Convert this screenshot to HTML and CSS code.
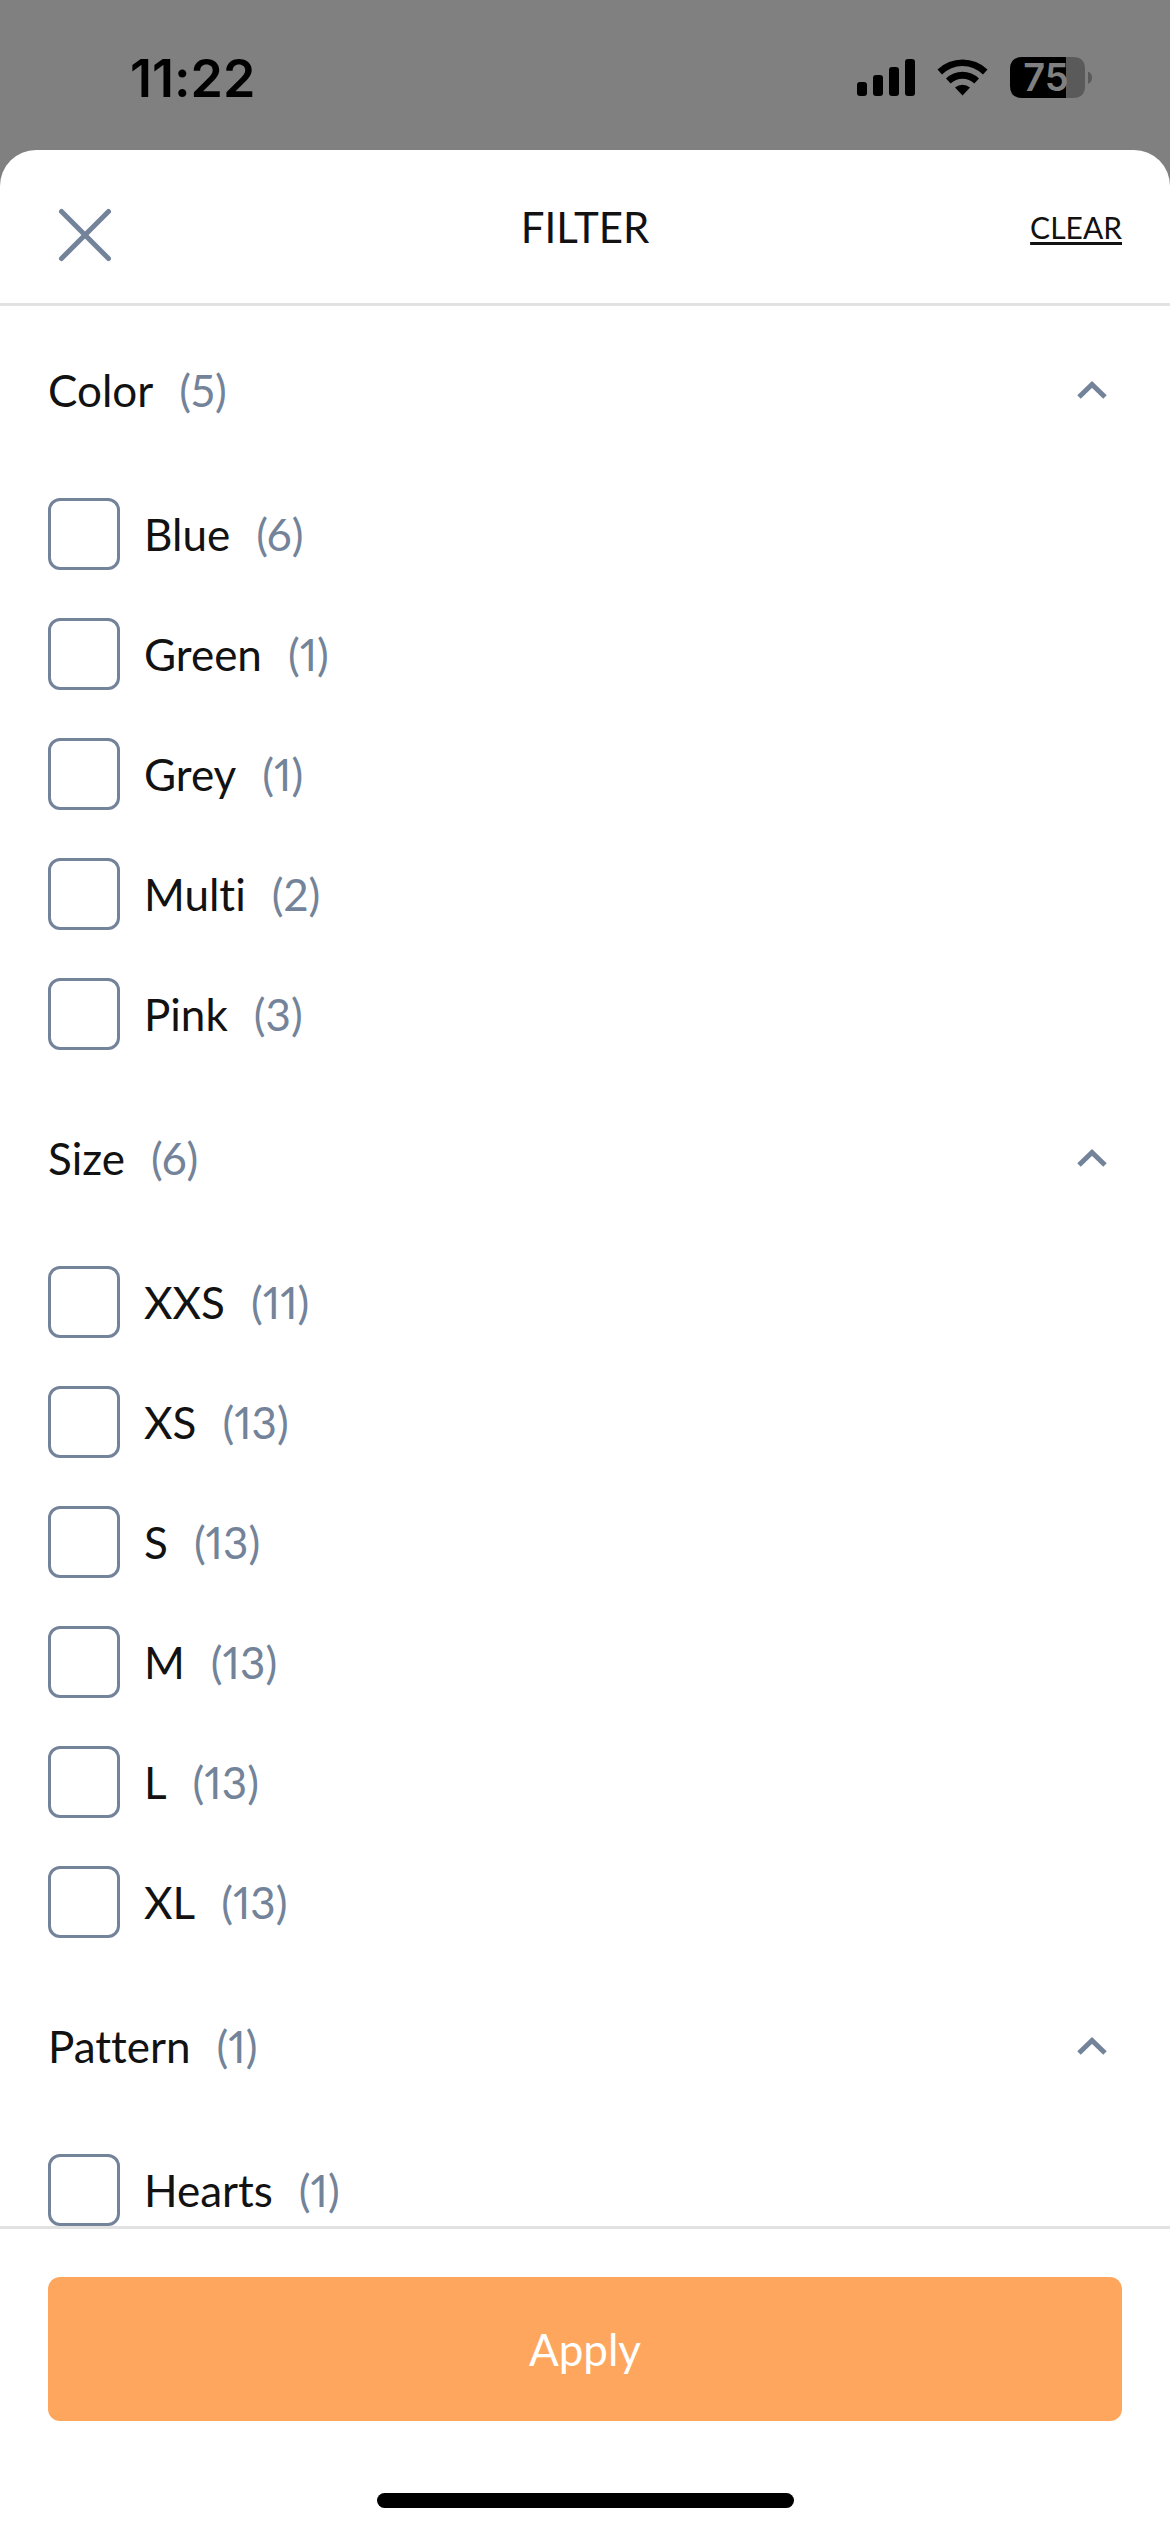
FILE: index.html
```
<!DOCTYPE html>
<html lang="en">
<head>
    <meta charset="UTF-8">
    <meta name="viewport" content="width=device-width, initial-scale=1.0">
    <title>Filter</title>
    <link rel="stylesheet" href="styles.css">
</head>
<body>
    <div class="status-bar">
        <span class="time">11:22</span>
        <div class="status-icons">
            <svg width="58" height="42" viewBox="0 0 58 42">
                <rect x="0" y="25" width="10" height="14" rx="3"/>
                <rect x="16" y="18" width="10" height="21" rx="3"/>
                <rect x="32" y="10" width="10" height="29" rx="3"/>
                <rect x="48" y="2" width="10" height="37" rx="3"/>
            </svg>
            <svg width="51" height="42" viewBox="0 0 51 42">
                <path d="M0.5 12.5A36 36 0 0 1 50.5 12.5L46 17.5A29 29 0 0 0 5 17.5Z"/>
                <path d="M9 21.5A23.500 23.500 0 0 1 42 21.500L37.300 26.500A17 17 0 0 0 13.700 26.500Z"/>
                <path d="M18 30.500A11.500 11.500 0 0 1 33 30.500L25.500 38.500Z"/>
            </svg>
            <svg width="82" height="54" viewBox="0 -6 82 54">
                <path class="battery-rest" d="M56 0H63Q75 0 75 12V29Q75 41 63 41H56Z"/>
                <path class="battery-rest" d="M78 14.500Q82 16 82 20.500T78 27Z"/>
                <path d="M12 0H56V41H12Q0 41 0 29V12Q0 0 12 0Z"/>
                <text class="battery-text" x="36" y="34" text-anchor="middle">75</text>
            </svg>
        </div>
    </div>

    <div class="sheet">
        <div class="sheet-header">
            <button class="close-btn" aria-label="Close">
                <svg width="72" height="72" viewBox="0 0 72 72">
                    <path d="M13.500 20.500L60.500 67.500M60.500 20.500L13.500 67.500"/>
                </svg>
            </button>
            <h1>FILTER</h1>
            <a class="clear-link" href="#">CLEAR</a>
        </div>

        <form class="filters" id="filters">
            <section class="filter-group">
                <div class="group-title">
                    <h2>Color</h2>
                    <span class="count">(5)</span>
                    <button type="button" class="toggle-btn" aria-label="Collapse Color">
                        <svg width="60" height="60" viewBox="0 0 60 60"><path d="M17 37L30 24.500L43 37"/></svg>
                    </button>
                </div>
                <div class="options">
                    <label class="option"><input type="checkbox" name="color" value="blue">Blue <span class="count">(6)</span></label>
                    <label class="option"><input type="checkbox" name="color" value="green">Green <span class="count">(1)</span></label>
                    <label class="option"><input type="checkbox" name="color" value="grey">Grey <span class="count">(1)</span></label>
                    <label class="option"><input type="checkbox" name="color" value="multi">Multi <span class="count">(2)</span></label>
                    <label class="option"><input type="checkbox" name="color" value="pink">Pink <span class="count">(3)</span></label>
                </div>
            </section>

            <section class="filter-group">
                <div class="group-title">
                    <h2>Size</h2>
                    <span class="count">(6)</span>
                    <button type="button" class="toggle-btn" aria-label="Collapse Size">
                        <svg width="60" height="60" viewBox="0 0 60 60"><path d="M17 37L30 24.500L43 37"/></svg>
                    </button>
                </div>
                <div class="options">
                    <label class="option"><input type="checkbox" name="size" value="xxs">XXS <span class="count">(11)</span></label>
                    <label class="option"><input type="checkbox" name="size" value="xs">XS <span class="count">(13)</span></label>
                    <label class="option"><input type="checkbox" name="size" value="s">S <span class="count">(13)</span></label>
                    <label class="option"><input type="checkbox" name="size" value="m">M <span class="count">(13)</span></label>
                    <label class="option"><input type="checkbox" name="size" value="l">L <span class="count">(13)</span></label>
                    <label class="option"><input type="checkbox" name="size" value="xl">XL <span class="count">(13)</span></label>
                </div>
            </section>

            <section class="filter-group">
                <div class="group-title">
                    <h2>Pattern</h2>
                    <span class="count">(1)</span>
                    <button type="button" class="toggle-btn" aria-label="Collapse Pattern">
                        <svg width="60" height="60" viewBox="0 0 60 60"><path d="M17 37L30 24.500L43 37"/></svg>
                    </button>
                </div>
                <div class="options">
                    <label class="option"><input type="checkbox" name="pattern" value="hearts">Hearts <span class="count">(1)</span></label>
                </div>
            </section>
        </form>

        <div class="sheet-footer">
            <button type="submit" form="filters" class="apply-btn">Apply</button>
            <div class="home-indicator"></div>
        </div>
    </div>
</body>
</html>
```

FILE: styles.css
```
* { box-sizing: border-box; }
body { margin: 0; height: 100vh; display: flex; flex-direction: column; background: #808080; color: #121212; font-family: Lato, "Liberation Sans", sans-serif; font-size: 44px; font-variant-ligatures: none; }
h1, h2 { margin: 0; font-size: 44px; font-weight: 400; }
h1 { font-size: 42px; }
button { border: none; background: none; padding: 0; font-family: inherit; cursor: pointer; }
svg { display: block; }

/* status bar */
.status-bar { height: 150px; flex-shrink: 0; display: flex; align-items: center; justify-content: space-between; padding: 6px 78px 0 130px; color: #000; }
.time { font-family: Inter, sans-serif; font-size: 52px; font-weight: 600; }
.status-icons { display: flex; align-items: center; gap: 22px; }
.battery-rest { fill: #5a5a5a; }
.battery-text { fill: #808080; font-family: Inter, sans-serif; font-size: 38px; font-weight: 600; }

/* bottom sheet */
.sheet { flex: 1; min-height: 0; display: flex; flex-direction: column; background: #fff; border-radius: 36px 36px 0 0; overflow: hidden; }
.sheet-header { height: 156px; flex-shrink: 0; display: grid; grid-template-columns: 1fr auto 1fr; align-items: center; padding: 0 48px; border-bottom: 3px solid #e2e2e2; }
.close-btn { justify-self: start; }
.close-btn path { fill: none; stroke: #738399; stroke-width: 5; stroke-linecap: round; }
.clear-link { justify-self: end; color: #121212; font-size: 30px; text-underline-offset: 3px; text-decoration-thickness: 3px; text-decoration-skip-ink: none; }

/* filter list */
.filters { flex: 1; min-height: 0; display: flex; flex-direction: column; gap: 72px; padding: 48px 48px 0; overflow-y: auto; scrollbar-width: none; }
.filter-group { display: flex; flex-direction: column; gap: 72px; }
.group-title { display: flex; align-items: center; gap: 24px; height: 72px; }
.toggle-btn { margin-left: auto; }
.toggle-btn path { fill: none; stroke: #738399; stroke-width: 5; }
.count { padding-left: 2px; color: #738399; font-variant-numeric: proportional-nums; }
.options { display: flex; flex-direction: column; gap: 48px; }
.option { display: flex; align-items: center; gap: 24px; height: 72px; cursor: pointer; }
.option input { appearance: none; width: 72px; height: 72px; margin: 0; border: 3px solid #738399; border-radius: 12px; background: #fff; }
.option input:checked { background: #738399; }

/* footer */
.sheet-footer { flex-shrink: 0; display: flex; flex-direction: column; align-items: center; gap: 72px; padding: 48px 48px 24px; border-top: 3px solid #e2e2e2; }
.apply-btn { width: 100%; height: 144px; border-radius: 12px; background: #ffa65e; color: #fff; font-size: 44px; }
.home-indicator { width: 417px; height: 15px; border-radius: 8px; background: #000; }
```
